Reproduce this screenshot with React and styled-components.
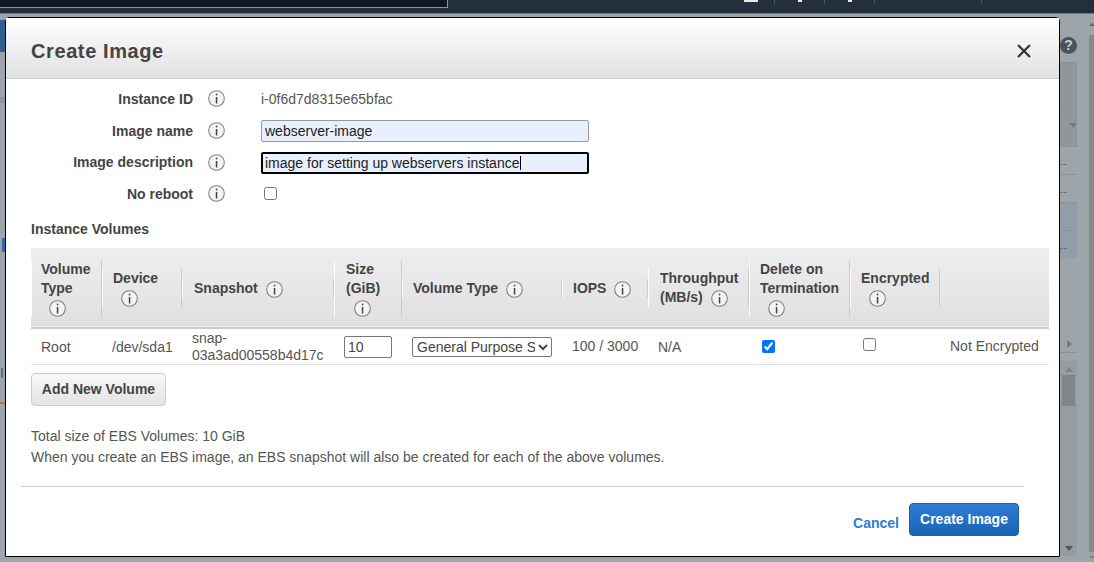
import { Fragment } from "react";
import styled, { createGlobalStyle } from "styled-components";

const GlobalStyle = createGlobalStyle`
  html, body { margin: 0; padding: 0; height: 100%; overflow: hidden; }
  body { font-family: "Liberation Sans", Arial, sans-serif; font-size: 14px; color: #444; background: #9da4aa; }
  * { box-sizing: border-box; }
`;

const Page = styled.div`
  position: relative;
  width: 1094px;
  height: 562px;
  display: flex;
  flex-direction: column;
  background: #9da4aa;
  overflow: hidden;
`;

/* ---- dimmed console behind the dialog ---- */
const TopBar = styled.div`
  height: 14px;
  flex: none;
  display: flex;
  background: #232f3e;
  border-bottom: 1px solid #6f7780;
`;
const SearchBox = styled.div`
  width: 448px;
  height: 8px;
  background: #12161f;
  border-right: 1px solid #8a9096;
  border-bottom: 1px solid #8a9096;
`;
const NavItems = styled.div`
  margin-left: 295px;
  display: flex;
`;
const NavItem = styled.div`
  width: ${(p) => p.$w}px;
  height: 4px;
  padding-right: ${(p) => p.$pad || 0}px;
  border-right: 1px solid #4a5562;
  display: flex;
  justify-content: center;
`;
const NavGlyph = styled.span`
  width: ${(p) => p.$w}px;
  height: 2px;
  background: #e8e8e8;
`;
const Workspace = styled.div`
  flex: 1;
  display: flex;
  justify-content: space-between;
`;
const LeftRail = styled.div`
  width: 5px;
  display: flex;
  flex-direction: column;
`;
const RailBlock = styled.div`
  height: ${(p) => p.$h}px;
  width: ${(p) => p.$w || 5}px;
  margin-top: ${(p) => p.$top || 0}px;
  margin-left: ${(p) => p.$left || 0}px;
  background: ${(p) => p.$bg};
`;
const RightRail = styled.div`
  width: 34px;
  display: flex;
`;
const RailColumn = styled.div`
  width: 17px;
  display: flex;
  flex-direction: column;
`;
const HelpBadge = styled.div`
  width: 17px;
  height: 17px;
  margin: 23px 0 8px 0;
  border-radius: 50%;
  background: #4b535c;
  color: #c5cacf;
  font-size: 14px;
  font-weight: 700;
  line-height: 17px;
  text-align: center;
`;
const RailRow = styled.div`
  height: ${(p) => p.$h}px;
  flex: none;
  background: ${(p) => p.$bg || "transparent"};
  border-top: 1px solid #8b9298;
  display: flex;
  align-items: center;
  justify-content: ${(p) => p.$align || "flex-end"};
`;
const Dots = styled.span`
  width: 7px;
  margin: 8px 10px 0 0;
  align-self: center;
  border-top: 1px dotted #4d5a68;
`;
const ScrollTrack = styled.div`
  margin-top: 8px;
  height: 195px;
  width: 17px;
  background: #959ca2;
  display: flex;
  flex-direction: column;
  align-items: center;
  padding: 6px 0 5px;
`;
const Thumb = styled.div`
  width: 13px;
  height: 31px;
  margin: 3px 0 auto;
  background: #7e858b;
`;
const PageScrollColumn = styled.div`
  width: 5px;
  margin-left: 12px;
  padding-top: 9px;
  display: flex;
  flex-direction: column;
`;
const PageScrollBar = styled.div`
  height: 517px;
  margin: 9px 0 4px;
  background: #848b90;
`;

/* ---- dialog ---- */
const Dialog = styled.div`
  position: absolute;
  left: 5px;
  top: 17px;
  width: 1055px;
  height: 540px;
  background: #fff;
  border: 1px solid #000;
  border-radius: 4px 4px 0 0;
  display: flex;
  flex-direction: column;
`;
const DialogHeader = styled.div`
  height: 61px;
  flex: none;
  padding: 0 28px 0 25px;
  display: flex;
  align-items: center;
  justify-content: space-between;
  background: linear-gradient(#ffffff, #e1e1e1);
  border-bottom: 1px solid #ccc;
`;
const Title = styled.h2`
  margin: 7px 0 0;
  font-size: 20px;
  font-weight: 700;
  letter-spacing: 0.6px;
  color: #444;
`;
const CloseIcon = styled.svg`
  width: 14px;
  height: 14px;
  margin-top: 5px;
  display: block;
`;
const DialogBody = styled.div`
  flex: 1;
  display: flex;
  flex-direction: column;
  padding: 4px 35px 0 25px;
`;
const FormGrid = styled.div`
  display: grid;
  grid-template-columns: 162px 46px 1fr;
  grid-auto-rows: 31.7px;
  align-items: center;
`;
const FieldLabel = styled.div`
  text-align: right;
  font-weight: 700;
  font-size: 14px;
  color: #444;
`;
const IconCell = styled.div`
  padding-left: 15px;
  display: flex;
`;
const InfoSvg = styled.svg`
  width: 17px;
  height: 17px;
  display: inline-block;
  flex: none;
  vertical-align: middle;
  margin-left: ${(p) => p.$gap || 0}px;
`;
const ValueText = styled.div`
  margin-left: 22px;
  color: #555;
  font-size: 14px;
`;
const FieldWrap = styled.div`
  position: relative;
  width: 328px;
  margin-left: 22px;
  padding-top: 1px;
`;
const TextField = styled.input`
  width: 328px;
  height: 22px;
  padding: 0 ${(p) => (p.$focused ? 2 : 3)}px;
  display: block;
  font: 14px "Liberation Sans", Arial, sans-serif;
  color: #222;
  background: #e8f0fe;
  border: ${(p) => (p.$focused ? "2px solid #000" : "1px solid #999")};
  border-radius: 2px;
  outline: none;
`;
const Caret = styled.span`
  position: absolute;
  left: 259px;
  top: 5px;
  width: 1px;
  height: 14px;
  background: #000;
`;
const CheckBox = styled.input`
  width: 13px;
  height: 13px;
  margin: 0 0 1px 25px;
  display: block;
`;
const SectionTitle = styled.div`
  margin-top: 11px;
  font-weight: 700;
  font-size: 14px;
  color: #444;
`;
const VolumesTable = styled.table`
  margin-top: 11px;
  width: 1018px;
  table-layout: fixed;
  border-collapse: collapse;
  font-size: 14px;
`;
const HeadRow = styled.tr`
  height: 80px;
  background: linear-gradient(#eeeeee, #e0e0e0);
  border-bottom: 2px solid #ccc;
`;
const HeadCell = styled.th`
  padding: 2px 0 0;
  text-align: left;
  font-weight: 700;
  color: #444;
`;
const HeadInner = styled.div`
  border-left: 1px solid #fff;
  border-right: 1px solid #ccc;
  padding-left: ${(p) => p.$pad}px;
  line-height: 19px;
  white-space: nowrap;
  min-height: 19px;
`;
const BodyRow = styled.tr`
  height: 35px;
  border-bottom: 1px solid #e1e1e1;
`;
const BodyCell = styled.td`
  padding: ${(p) => p.$top || 0}px 0 0 10px;
  color: #555;
  line-height: 17px;
  overflow: hidden;
`;
const SizeInput = styled.input`
  width: 48px;
  height: 22px;
  padding: 0 3px;
  display: block;
  font: 14px "Liberation Sans", Arial, sans-serif;
  color: #444;
  border: 1px solid #777;
  border-radius: 2px;
`;
const TypeSelect = styled.select`
  width: 140px;
  height: 20px;
  display: block;
  font: 14px "Liberation Sans", Arial, sans-serif;
  color: #444;
  background: #fff;
  border: 1px solid #777;
  border-radius: 2px;
  padding: 0;
`;
const TableCheck = styled.input`
  width: 13px;
  height: 13px;
  margin: ${(p) => p.$drop || 0}px 0 ${(p) => p.$lift || 0}px 3px;
  display: block;
`;
const GreyButton = styled.button`
  align-self: flex-start;
  margin-top: 8px;
  width: 135px;
  height: 33px;
  padding: 0;
  font: 700 14px "Liberation Sans", Arial, sans-serif;
  color: #444;
  background: linear-gradient(#f8f8f8, #e3e3e3);
  border: 1px solid #ccc;
  border-radius: 4px;
`;
const Notes = styled.div`
  margin-top: 20px;
  line-height: 21px;
  color: #555;
  font-size: 14px;
`;
const Divider = styled.hr`
  margin: 18px 0 0 -10px;
  width: 1003px;
  height: 1px;
  border: 0;
  background: #ccc;
`;
const Footer = styled.div`
  margin: 16px 5px 0 0;
  display: flex;
  align-items: center;
  justify-content: flex-end;
  gap: 10px;
`;
const CancelLink = styled.a`
  margin-top: 7px;
  font-weight: 700;
  font-size: 14px;
  color: #2b7cd3;
`;
const PrimaryButton = styled.button`
  width: 110px;
  height: 33px;
  padding: 0;
  font: 700 14px "Liberation Sans", Arial, sans-serif;
  color: #fff;
  background: linear-gradient(#2a7fd5, #1b63b5);
  border: 1px solid #1b5fa8;
  border-radius: 4px;
`;

const Info = ({ gap }) => (
  <InfoSvg viewBox="0 0 17 17" $gap={gap}>
    <circle cx="8.5" cy="8.5" r="7.8" fill="#f4f4f4" stroke="#808080" strokeWidth="1.1" />
    <rect x="7.8" y="7" width="1.5" height="6.5" fill="#444" />
    <rect x="7.8" y="3.6" width="1.5" height="1.8" fill="#444" />
  </InfoSvg>
);

const fields = [
  { label: "Instance ID", text: "i-0f6d7d8315e65bfac" },
  { label: "Image name", value: "webserver-image" },
  { label: "Image description", value: "image for setting up webservers instance", focused: true },
  { label: "No reboot", check: true },
];

// lines of each header cell, the icon goes on the last line or on its own
const columns = [
  { w: 71, pad: 9, lines: ["Volume", "Type"], iconLine: true },
  { w: 80, pad: 10, lines: ["Device"], iconLine: true },
  { w: 152, pad: 11, lines: ["Snapshot"] },
  { w: 68, pad: 11, lines: ["Size", "(GiB)"], iconLine: true },
  { w: 160, pad: 10, lines: ["Volume Type"] },
  { w: 86, pad: 10, lines: ["IOPS"] },
  { w: 101, pad: 11, lines: ["Throughput", "(MB/s)"] },
  { w: 101, pad: 10, lines: ["Delete on", "Termination"], iconLine: true },
  { w: 90, pad: 10, lines: ["Encrypted"], iconLine: true },
  { w: 109, lines: [], noIcon: true },
];

const Head = ({ col }) => (
  <HeadCell>
    {col.noIcon ? null : (
      <HeadInner $pad={col.pad}>
        {col.lines.map((line, i) => (
          <div key={line}>
            {line}
            {!col.iconLine && i === col.lines.length - 1 ? <Info gap={8} /> : null}
          </div>
        ))}
        {col.iconLine ? <div><Info gap={8} /></div> : null}
      </HeadInner>
    )}
  </HeadCell>
);

export default function App() {
  return (
    <Page>
      <GlobalStyle />
      <TopBar>
        <SearchBox />
        <NavItems>
          <NavItem $w={32} $pad={16}><NavGlyph $w={14} /></NavItem>
          <NavItem $w={50}><NavGlyph $w={4} /></NavItem>
          <NavItem $w={50}><NavGlyph $w={4} /></NavItem>
          <NavItem $w={107} />
        </NavItems>
      </TopBar>
      <Workspace>
        <LeftRail>
          <RailBlock $h={32} $top={6} $bg="#2f5f8f" />
          <RailBlock $h={6} $top={45} $bg="#8f969b" />
          <RailBlock $h={14} $top={135} $w={3} $left={2} $bg="#2c6aa8" />
          <RailBlock $h={10} $top={116} $w={2} $left={1} $bg="#54709a" />
          <RailBlock $h={2} $top={24} $bg="#a67c3a" />
        </LeftRail>
        <RightRail>
          <RailColumn>
            <HelpBadge>?</HelpBadge>
            <RailRow $h={42} $bg="#8f969c" />
            <RailRow $h={42} $bg="#8f969c">
              <svg width="8" height="5" viewBox="0 0 8 5">
                <path d="M0 0h8L4 5z" fill="#737a80" />
              </svg>
            </RailRow>
            <RailRow $h={28}><Dots /></RailRow>
            <RailRow $h={28}><Dots /></RailRow>
            <RailRow $h={28} $bg="#919ea9" />
            <RailRow $h={28} $bg="#919ea9"><Dots /></RailRow>
            <RailRow $h={78} style={{ borderTop: 0 }} />
            <RailRow $h={17} $align="flex-start" style={{ borderTop: 0, borderBottom: "1px solid #8b9298", paddingLeft: 7 }}>
              <svg width="5" height="8" viewBox="0 0 5 8">
                <path d="M0 0v8l5-4z" fill="#737a80" />
              </svg>
            </RailRow>
            <ScrollTrack>
              <svg width="8" height="5" viewBox="0 0 8 5">
                <path d="M0 5h8L4 0z" fill="#7b8288" />
              </svg>
              <Thumb />
              <svg width="8" height="5" viewBox="0 0 8 5">
                <path d="M0 0h8L4 5z" fill="#4f565c" />
              </svg>
            </ScrollTrack>
          </RailColumn>
          <PageScrollColumn>
            <svg width="5" height="3" viewBox="0 0 5 3">
              <path d="M3 0l-3 3h6z" fill="#5f666c" />
            </svg>
            <PageScrollBar />
            <svg width="5" height="3" viewBox="0 0 5 3">
              <path d="M0 0h6l-3 3z" fill="#7b8288" />
            </svg>
          </PageScrollColumn>
        </RightRail>
      </Workspace>

      <Dialog>
        <DialogHeader>
          <Title>Create Image</Title>
          <CloseIcon viewBox="0 0 14 14">
            <path d="M1 1l12 12M13 1L1 13" stroke="#333" strokeWidth="2.2" fill="none" />
          </CloseIcon>
        </DialogHeader>
        <DialogBody>
          <FormGrid>
            {fields.map((f) => (
              <Fragment key={f.label}>
                <FieldLabel>{f.label}</FieldLabel>
                <IconCell><Info /></IconCell>
                <div>
                  {f.text ? <ValueText>{f.text}</ValueText> : null}
                  {f.value ? (
                    <FieldWrap>
                      <TextField defaultValue={f.value} $focused={f.focused} />
                      {f.focused ? <Caret /> : null}
                    </FieldWrap>
                  ) : null}
                  {f.check ? <CheckBox type="checkbox" /> : null}
                </div>
              </Fragment>
            ))}
          </FormGrid>
          <SectionTitle>Instance Volumes</SectionTitle>
          <VolumesTable>
            <colgroup>
              {columns.map((c, i) => <col key={i} width={c.w} />)}
            </colgroup>
            <thead>
              <HeadRow>
                {columns.map((c, i) => <Head key={i} col={c} />)}
              </HeadRow>
            </thead>
            <tbody>
              <BodyRow>
                <BodyCell $top={2}>Root</BodyCell>
                <BodyCell $top={2}>/dev/sda1</BodyCell>
                <BodyCell $top={1}>snap-<br />03a3ad00558b4d17c</BodyCell>
                <BodyCell $top={2}><SizeInput defaultValue="10" /></BodyCell>
                <BodyCell $top={2}>
                  <TypeSelect defaultValue="gp2">
                    <option value="gp2">General Purpose SSD (gp2)</option>
                  </TypeSelect>
                </BodyCell>
                <BodyCell>100 / 3000</BodyCell>
                <BodyCell $top={2}>N/A</BodyCell>
                <BodyCell><TableCheck type="checkbox" defaultChecked $drop={1} /></BodyCell>
                <BodyCell><TableCheck type="checkbox" $lift={4} /></BodyCell>
                <BodyCell>Not Encrypted</BodyCell>
              </BodyRow>
            </tbody>
          </VolumesTable>
          <GreyButton>Add New Volume</GreyButton>
          <Notes>
            Total size of EBS Volumes: 10 GiB<br />
            When you create an EBS image, an EBS snapshot will also be created for each of the above volumes.
          </Notes>
          <Divider />
          <Footer>
            <CancelLink>Cancel</CancelLink>
            <PrimaryButton>Create Image</PrimaryButton>
          </Footer>
        </DialogBody>
      </Dialog>
    </Page>
  );
}
